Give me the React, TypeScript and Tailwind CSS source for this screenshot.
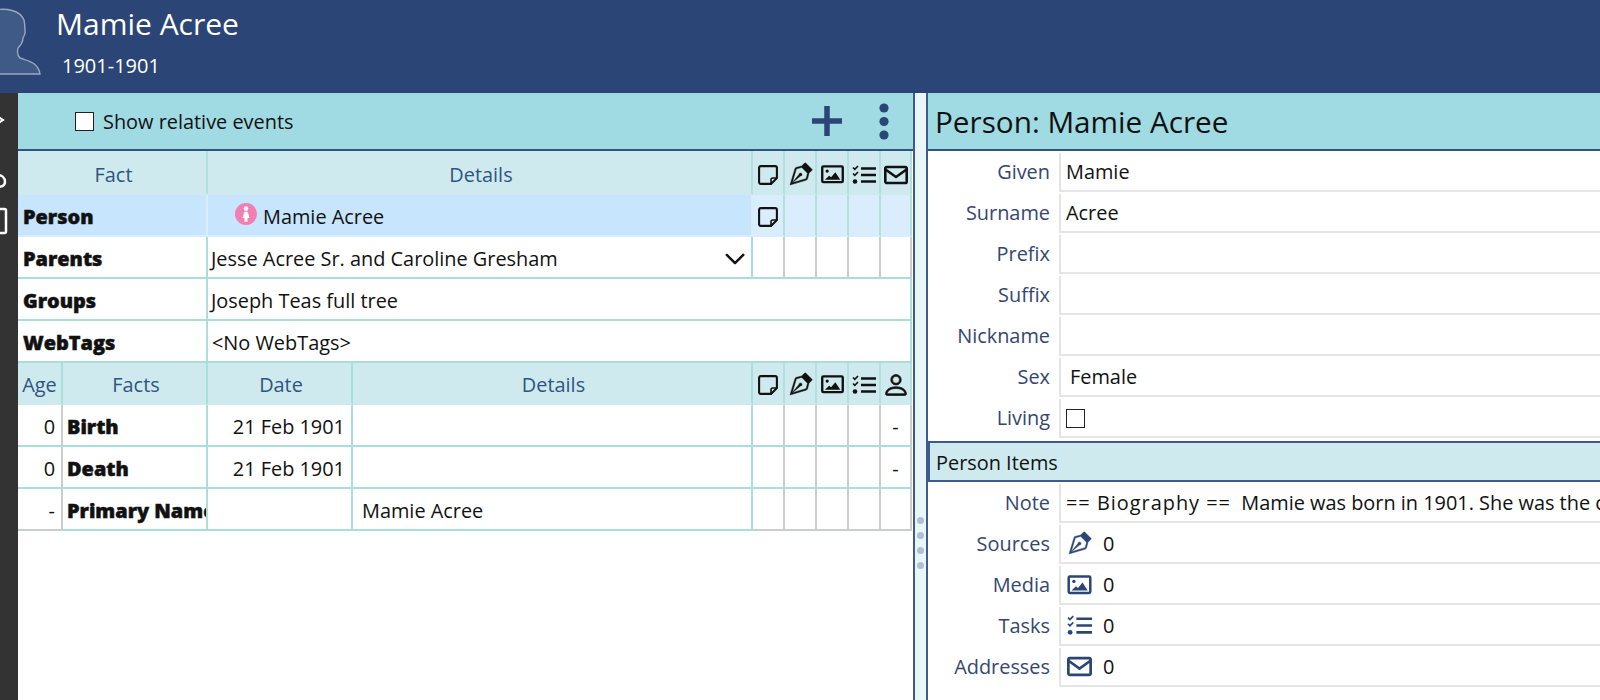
import React from "react";
import { BsVectorPen, BsPerson, BsChevronDown } from "react-icons/bs";

const ImageIcon = ({ className = "" }: { className?: string }) => (
  <svg viewBox="0 0 24 20" className={className} fill="none">
    <rect x="1.2" y="1.5" width="21.6" height="16.5" rx="1.2" stroke="currentColor" strokeWidth="2.5" />
    <circle cx="6.4" cy="6.4" r="1.7" fill="currentColor" />
    <path d="M4 15.5l4.5-4.2 2 1.6L15 7.5l5.2 8z" fill="currentColor" />
  </svg>
);
const TasksIcon = ({ className = "" }: { className?: string }) => (
  <svg viewBox="0 0 24 20" className={className} fill="none" stroke="currentColor">
    <path d="M9 3.5h15M9 10h15M9 16.5h15" strokeWidth="2.6" />
    <path d="M1 2.5l1.8 1.8L6 1M1 8.5l1.8 1.8L6 7" strokeWidth="1.6" />
    <circle cx="3" cy="16.5" r="2.3" fill="currentColor" stroke="none" />
  </svg>
);
const MailIcon = ({ className = "" }: { className?: string }) => (
  <svg viewBox="0 0 24 20" className={className} fill="none" stroke="currentColor" strokeWidth="2.6">
    <rect x="1.3" y="2" width="21.4" height="16" rx="1.6" />
    <path d="M1.5 4.5l10.5 7.5L22.5 4.5" />
  </svg>
);
const Sticky = () => (
  <svg viewBox="0 0 20 20" className="w-[20px] h-[20px]" fill="none" stroke="currentColor" strokeWidth="2.1">
    <path d="M13 18.9H2.8a1.7 1.7 0 0 1-1.7-1.7V2.8a1.7 1.7 0 0 1 1.7-1.7h14.4a1.7 1.7 0 0 1 1.7 1.7V13z" strokeLinejoin="round" />
    <path d="M18.9 13h-4.2a1.7 1.7 0 0 0-1.7 1.7v4.2" strokeWidth="1.6" />
  </svg>
);
const Pen = ({ className = "w-[25px] h-[25px]" }: { className?: string }) => (
  <BsVectorPen className={`${className} stroke-[0.25] stroke-current`} />
);

const teal = "border-[#a8dfd8]";
const grey = "border-[#c9cdcd]";
const heavy = "font-black [-webkit-text-stroke:0.5px_#111]";

const Cell = ({
  children,
  className = "",
}: {
  children?: React.ReactNode;
  className?: string;
}) => (
  <div className={`h-[42px] pt-[3px] flex items-center overflow-hidden whitespace-pre border-b-2 border-r-2 ${className}`}>
    {children}
  </div>
);

const IconCols = ({
  icons,
  bg = "",
  hdr = false,
  bottom = grey,
  tall = false,
}: {
  icons: React.ReactNode[];
  bg?: string;
  hdr?: boolean;
  bottom?: string;
  tall?: boolean;
}) => (
  <>
    {icons.map((ic, i) => (
      <Cell
        key={i}
        className={`justify-center ${tall ? "!h-[44px] !pt-[5px]" : ""} ${bg} ${bottom} ${hdr ? "border-r-[#b4e0dc]" : "border-r-[#c9cdcd]"}`}
      >
        {ic}
      </Cell>
    ))}
  </>
);

const hdrIcons = (last: React.ReactNode) => [
  <Sticky key="a" />,
  <Pen key="b" />,
  <ImageIcon key="c" className="w-[23px] h-[19px]" />,
  <TasksIcon key="d" className="w-[24px] h-[20px]" />,
  last,
];

const factCols = "grid grid-cols-[190px_545px_32px_32px_32px_32px_31px]";
const eventCols = "grid grid-cols-[45px_145px_145px_400px_32px_32px_32px_32px_31px]";
const hdrText = "text-[#2f5480] justify-center bg-[#cfeaef] pl-[3px]";
const blank = ["", "", "", "", ""].map(() => null);

const FactRow = ({ name, children, icons }: { name: string; children?: React.ReactNode; icons?: React.ReactNode[] }) => (
  <div className={factCols}>
    <Cell className={`${teal} pl-[5px] ${heavy}`}>{name}</Cell>
    {icons ? (
      <>
        <Cell className={`${teal} pl-[3px]`}>{children}</Cell>
        <IconCols icons={icons} bottom={teal} />
      </>
    ) : (
      <div className={`col-span-6 h-[42px] pt-[3px] flex items-center pl-[3px] border-b-2 border-r-2 ${teal}`}>{children}</div>
    )}
  </div>
);

const EventRow = ({
  age,
  name,
  date,
  details,
  last,
  end,
}: {
  age: string;
  name: string;
  date?: string;
  details?: string;
  last?: string;
  end?: boolean;
}) => (
  <div className={eventCols}>
    <Cell className={`justify-end pr-[6px] border-r-[#c9cdcd] ${end ? grey : teal}`}>{age}</Cell>
    <Cell className={`pl-[4px] ${heavy} ${teal}`}>{name}</Cell>
    <Cell className={`justify-end pr-[6px] ${teal}`}>{date}</Cell>
    <Cell className={`pl-[9px] ${teal}`}>{details}</Cell>
    <IconCols icons={[null, null, null, null, last ?? null]} bottom={end ? grey : teal} />
  </div>
);

const FormRow = ({ label, children }: { label: string; children?: React.ReactNode }) => (
  <div className="h-[41px] flex">
    <div className="w-[131px] shrink-0 flex items-center justify-end pr-[9px] pb-[2px] text-[#34466f]">{label}</div>
    <div className="flex-1 h-[39px] mt-px pt-[1px] border-l-2 border-b-2 border-[#e4e6e6] flex items-center pl-[5px] overflow-hidden whitespace-pre text-[#111]">
      {children}
    </div>
  </div>
);

const Count = ({ children }: { children: React.ReactNode }) => (
  <div className="flex items-center">
    <span className="w-[25px] flex justify-center text-[#2b4577] mr-[11px] ml-[1px]">{children}</span>0
  </div>
);

export default function App() {
  return (
    <div
      className="w-[1600px] h-[700px] overflow-hidden flex flex-col bg-white text-[19.9px] text-[#111]"
      style={{ fontFamily: '"Open Sans", "Noto Sans", sans-serif' }}
    >
      <header className="h-[93px] shrink-0 bg-[#2b4577] flex text-white">
        <svg viewBox="0 0 44 93" className="w-[44px] h-[93px] shrink-0">
          <path
            d="M-5 10 C6 8 20 10 24 20 C25 25 25 28 25 31 C26 33 24 36 23 38 C23 42 21 45 18 48 C17 52 17 55 20 58 C28 61 38 62 40 74 L-5 74 Z"
            fill="#3f5a87"
            stroke="#9aa8bf"
            strokeWidth="1.4"
          />
        </svg>
        <div className="ml-[12px]">
          <div className="text-[30px] leading-[40px] mt-[4px]">Mamie Acree</div>
          <div className="text-[20px] leading-[28px] mt-[8px] ml-[6px]">1901-1901</div>
        </div>
      </header>

      <div className="flex flex-1 min-h-0">
        <svg viewBox="0 0 18 607" className="w-[18px] h-[607px] shrink-0 bg-[#333333]">
          <path d="M-3 23 L3 27 L-3 31" stroke="#fff" strokeWidth="2" fill="none" />
          <path d="M-3 82 C2 82 5 85 5 89 C5 93 2 94 -3 94" stroke="#fff" strokeWidth="2.5" fill="none" />
          <rect x="-8" y="116" width="14" height="24" rx="1.5" stroke="#fff" strokeWidth="2.5" fill="none" />
        </svg>

        <main className="w-[895px] shrink-0 flex flex-col">
          <div className="h-[58px] shrink-0 bg-[#a0dae2] border-b-2 border-[#2f5480] flex items-center">
            <span className="ml-[57px] w-[19px] h-[19px] bg-white border border-[#222] shrink-0" />
            <span className="ml-[9px] pt-[2px]">Show relative events</span>
            <svg viewBox="0 0 30 30" className="ml-auto w-[30px] h-[30px]">
              <path d="M15 0v30M0 15h30" stroke="#2b4577" strokeWidth="5.5" />
            </svg>
            <svg viewBox="0 0 10 37" className="ml-[37px] mr-[24px] w-[10px] h-[37px]">
              <circle cx="5" cy="5" r="4.6" fill="#2b4577" />
              <circle cx="5" cy="18.5" r="4.6" fill="#2b4577" />
              <circle cx="5" cy="32" r="4.6" fill="#2b4577" />
            </svg>
          </div>
          <div className="w-[895px]">
            <div className={factCols}>
              <Cell className={`${hdrText} !h-[44px] !pt-[5px] border-b-[#cfeaef] border-r-[#b4e0dc]`}>Fact</Cell>
              <Cell className={`${hdrText} !h-[44px] !pt-[5px] border-b-[#cfeaef] border-r-[#b4e0dc]`}>Details</Cell>
              <IconCols
                icons={hdrIcons(<MailIcon key="e" className="w-[24px] h-[20px]" />)}
                bg="bg-[#cfeaef]"
                hdr
                tall
                bottom="border-b-[#cfeaef]"
              />
            </div>
            <div className={factCols}>
              <Cell className={`bg-[#c7e5fd] border-[#d9eefc] pl-[5px] ${heavy}`}>Person</Cell>
              <Cell className="bg-[#c7e5fd] border-[#d9eefc] pl-[27px]">
                <svg viewBox="0 0 22 22" className="w-[22px] h-[22px] mb-[6px] shrink-0">
                  <circle cx="11" cy="11" r="11" fill="#f27fb2" />
                  <circle cx="11" cy="5.6" r="2.3" fill="#fff" />
                  <path d="M11 8.5c-1.6 0-2 .8-2.2 2L7.5 15h2v3.8h3V15h2l-1.3-4.5c-.2-1.2-.6-2-2.2-2z" fill="#fff" />
                </svg>
                <span className="ml-[6px]">Mamie Acree</span>
              </Cell>
              <IconCols
                icons={[<Sticky key="s" />, null, null, null, null]}
                bg="bg-[#d9edfd]"
                hdr
                bottom="border-b-[#d9edfd]"
              />
            </div>
            <FactRow name="Parents" icons={blank}>
              <span>Jesse Acree Sr. and Caroline Gresham</span>
              <BsChevronDown className="ml-auto mr-[5px] w-[22px] h-[22px] stroke-[0.8] stroke-current" />
            </FactRow>
            <FactRow name="Groups">Joseph Teas full tree</FactRow>
            <FactRow name="WebTags">
              <span className="ml-[1px]">{"<No WebTags>"}</span>
            </FactRow>
            <div className={eventCols}>
              <Cell className={`${hdrText} !pl-0 border-b-[#cfeaef] border-r-[#a8dfd8]`}>Age</Cell>
              <Cell className={`${hdrText} border-b-[#cfeaef] border-r-[#a8dfd8]`}>Facts</Cell>
              <Cell className={`${hdrText} border-b-[#cfeaef] border-r-[#a8dfd8]`}>Date</Cell>
              <Cell className={`${hdrText} border-b-[#cfeaef] border-r-[#a8dfd8]`}>Details</Cell>
              <IconCols
                icons={hdrIcons(<BsPerson key="p" className="w-[28px] h-[28px] stroke-[0.4] stroke-current" />)}
                bg="bg-[#cfeaef]"
                hdr
                bottom="border-b-[#cfeaef]"
              />
            </div>
            <EventRow age="0" name="Birth" date="21 Feb 1901" last="-" />
            <EventRow age="0" name="Death" date="21 Feb 1901" last="-" />
            <EventRow age="-" name="Primary Name" details="Mamie Acree" end />
          </div>
        </main>

        <div className="w-[15px] shrink-0 border-x-2 border-[#3f5a8c] bg-[#e8f6f8] flex flex-col items-center gap-[8px] pt-[424px]">
          {[0, 1, 2, 3].map((i) => (
            <span key={i} className="w-[7px] h-[7px] rounded-full bg-[#b3bed4]" />
          ))}
        </div>

        <aside className="flex-1 min-w-0 flex flex-col">
          <div className="h-[58px] shrink-0 bg-[#a0dae2] border-b-2 border-[#2f5480] flex items-center pl-[7px] pt-[2px] text-[29.7px]">
            Person: Mamie Acree
          </div>
          <div className="mt-px">
            <FormRow label="Given">Mamie</FormRow>
            <FormRow label="Surname">Acree</FormRow>
            <FormRow label="Prefix" />
            <FormRow label="Suffix" />
            <FormRow label="Nickname" />
            <FormRow label="Sex">
              <span className="ml-[4px]">Female</span>
            </FormRow>
            <FormRow label="Living">
              <span className="w-[19px] h-[19px] border border-[#222] bg-white" />
            </FormRow>
          </div>
          <div className="h-[41px] mt-[2px] pt-[2px] bg-[#cfeaef] border-2 border-r-0 border-[#3f5a8c] flex items-center pl-[6px]">
            Person Items
          </div>
          <div className="mt-px">
            <FormRow label="Note">
              <span className="tracking-[1px]">== Biography ==</span>  Mamie was born in 1901. She was the child of Jesse Acree Sr. and Caroline Gresham.
            </FormRow>
            <FormRow label="Sources">
              <Count>
                <Pen className="w-[29px] h-[29px]" />
              </Count>
            </FormRow>
            <FormRow label="Media">
              <Count>
                <ImageIcon className="w-[25px] h-[20px]" />
              </Count>
            </FormRow>
            <FormRow label="Tasks">
              <Count>
                <TasksIcon className="w-[25px] h-[21px]" />
              </Count>
            </FormRow>
            <FormRow label="Addresses">
              <Count>
                <MailIcon className="w-[25px] h-[21px]" />
              </Count>
            </FormRow>
          </div>
        </aside>
      </div>
    </div>
  );
}
